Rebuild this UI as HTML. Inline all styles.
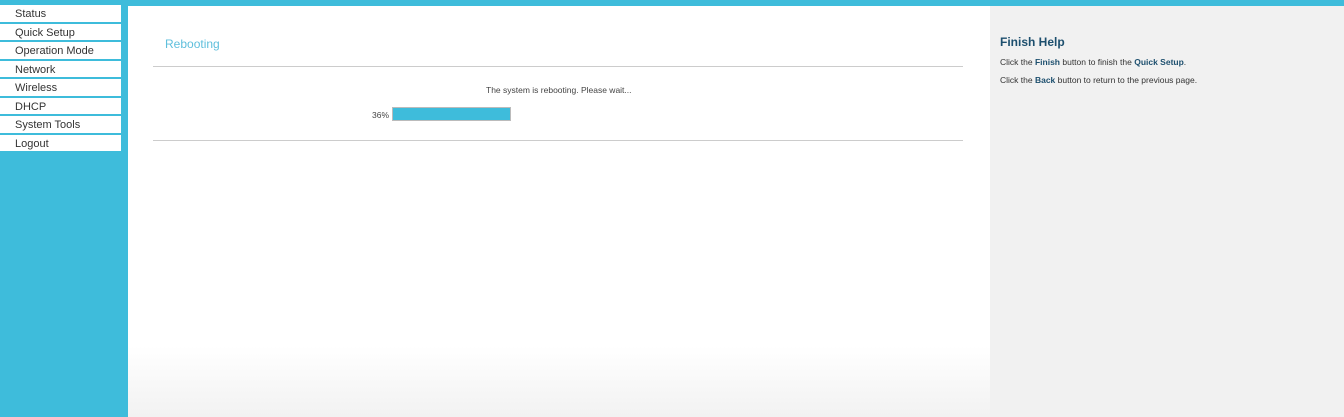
<!DOCTYPE html>
<html><head><style>
body{margin:0;width:1344px;height:417px;overflow:hidden;background:#3ebcdb;font-family:"Liberation Sans",Arial,sans-serif;position:relative}
.menu{position:absolute;left:0;top:5px;width:121px}
.menu div{height:15.5px;padding-top:1px;background:#fff;border-bottom:2px solid #3ebcdb;font-size:11px;color:#333;padding-left:15px;line-height:17px}
.main{position:absolute;left:128px;top:6px;width:862px;height:411px;background:linear-gradient(#fff 0,#fff 340px,#f2f2f2 411px)}
.help{position:absolute;left:990px;top:6px;width:354px;height:411px;background:#f1f1f1}
.help h3{margin:0;position:absolute;left:10px;top:29px;font-size:12px;color:#1d4f6e}
.help p{margin:0;position:absolute;left:10px;font-size:8.5px;color:#333}
.help b{color:#1d4f6e}
.hr{position:absolute;left:25px;width:810px;height:1px;background:#ccc}
</style></head><body>
<div class="menu"><div>Status</div><div>Quick Setup</div><div>Operation Mode</div><div>Network</div><div>Wireless</div><div>DHCP</div><div>System Tools</div><div>Logout</div></div>
<div class="main">
<div style="position:absolute;left:37px;top:31px;font-size:12px;color:#5fbfdc">Rebooting</div>
<div class="hr" style="top:60px"></div>
<div style="position:absolute;left:358px;top:79px;font-size:8.5px;color:#444">The system is rebooting. Please wait...</div>
<div style="position:absolute;left:244px;top:104px;font-size:8.5px;color:#444">36%</div>
<div style="position:absolute;left:264px;top:101px;width:119px;height:14px;background:#3ebcdb;border:1px solid #bbb;box-sizing:border-box"></div>
<div class="hr" style="top:134px"></div>
</div>
<div class="help"><h3>Finish Help</h3>
<p style="top:51px">Click the <b>Finish</b> button to finish the <b>Quick Setup</b>.</p>
<p style="top:69px">Click the <b>Back</b> button to return to the previous page.</p></div>
</body></html>
